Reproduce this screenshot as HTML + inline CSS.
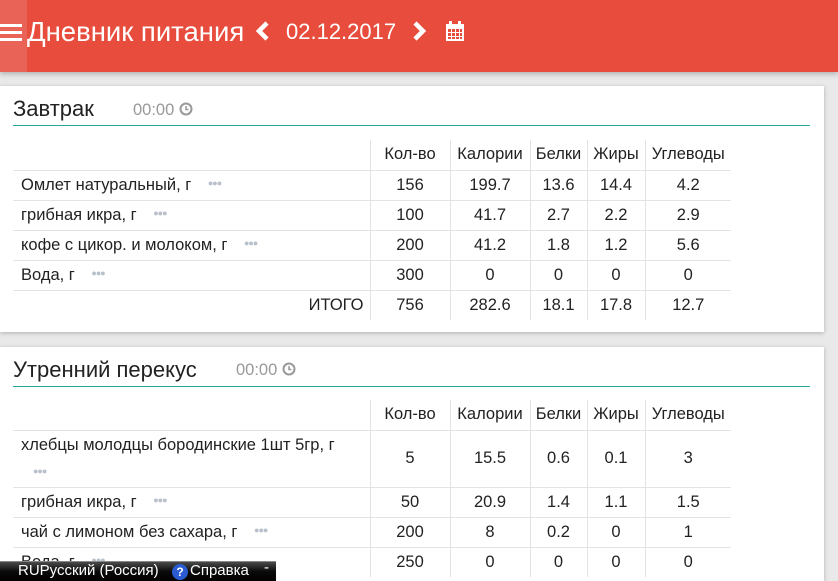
<!DOCTYPE html>
<html><head><meta charset="utf-8"><style>
*{margin:0;padding:0;box-sizing:border-box}
html,body{width:838px;height:581px;overflow:hidden}
body{background:#e9e9e9;font-family:"Liberation Sans","DejaVu Sans",sans-serif;position:relative;color:#222}
.hdr{position:absolute;left:0;top:0;width:838px;height:72px;background:#e74c3c;box-shadow:0 2px 5px rgba(0,0,0,.25)}
.hdr .blk{position:absolute;left:0;top:0;width:27px;height:72px;background:#ea6357}
.hdr .t{position:absolute;left:27px;top:16px;font-size:27.5px;color:#fff}
.hdr .d{position:absolute;left:286px;top:19px;font-size:22px;color:#fff}
.card{position:absolute;left:0;width:824px;background:#fff;box-shadow:0 1px 4px rgba(0,0,0,.25)}
.ttl{position:absolute;left:13px;font-size:22px;color:#222}
.tm{position:absolute;font-size:16.5px;color:#999}
.ul{position:absolute;left:13px;width:797px;height:1px;background:#26a69a}
table{position:absolute;left:13px;border-collapse:collapse;font-size:16.5px;table-layout:fixed}
td{border-top:1px solid #e3e3e3;border-left:1px solid #e3e3e3;text-align:center;height:30px;padding:0;vertical-align:middle;white-space:nowrap}
td.n{border-left:none;text-align:left;padding-left:8px}
tr.h td{border-top:none}
.dots{color:#b8c0cc;font-size:9px;letter-spacing:-1px;margin-left:12px;vertical-align:4px}
.tb{position:absolute;left:0;top:561px;width:276px;height:20px;background:linear-gradient(#4a4a4a,#0a0a0a 50%,#000);color:#fff;font-size:15px;border-top:1px solid #888}
</style></head><body>
<div class="hdr"><div class="blk"></div>
<svg style="position:absolute;left:0;top:22px" width="22" height="20"><rect x="0" y="2" width="22" height="3" fill="#fff"/><rect x="0" y="9" width="22" height="3" fill="#fff"/><rect x="0" y="16" width="22" height="3" fill="#fff"/></svg>
<div class="t">Дневник питания</div>
<svg style="position:absolute;left:255px;top:21px" width="16" height="20"><path d="M12 2 L4 10 L12 18" stroke="#fff" stroke-width="4.5" fill="none"/></svg>
<div class="d">02.12.2017</div>
<svg style="position:absolute;left:411px;top:21px" width="16" height="20"><path d="M4 2 L12 10 L4 18" stroke="#fff" stroke-width="4.5" fill="none"/></svg>
<svg style="position:absolute;left:445px;top:20px" width="20" height="22"><rect x="1" y="4" width="18" height="17" fill="#fff"/><rect x="4" y="1" width="3" height="5" fill="#fff"/><rect x="13" y="1" width="3" height="5" fill="#fff"/><g fill="#e74c3c"><rect x="3" y="9" width="3" height="3"/><rect x="7" y="9" width="3" height="3"/><rect x="11" y="9" width="3" height="3"/><rect x="15" y="9" width="2" height="3"/><rect x="3" y="13" width="3" height="3"/><rect x="7" y="13" width="3" height="3"/><rect x="11" y="13" width="3" height="3"/><rect x="15" y="13" width="2" height="3"/><rect x="3" y="17" width="3" height="2"/><rect x="7" y="17" width="3" height="2"/><rect x="11" y="17" width="3" height="2"/><rect x="15" y="17" width="2" height="2"/></g></svg>
</div>

<div class="card" style="top:86px;height:246px">
<div class="ttl" style="top:10px">Завтрак</div>
<div class="tm" style="left:133px;top:15px">00:00 <svg width="14" height="14" style="vertical-align:-1px"><circle cx="7" cy="7" r="5.5" stroke="#999" stroke-width="2" fill="none"/><path d="M7 4V7.5H9.5" stroke="#999" stroke-width="1.5" fill="none"/></svg></div>
<div class="ul" style="top:39px"></div>
<table style="top:54px;width:718px">
<colgroup><col style="width:357px"><col style="width:80px"><col style="width:80px"><col style="width:57px"><col style="width:58px"><col style="width:86px"></colgroup>
<tr class="h"><td class="n"></td><td>Кол-во</td><td>Калории</td><td>Белки</td><td>Жиры</td><td>Углеводы</td></tr>
<tr><td class="n">Омлет натуральный, г <span class="dots">●●●</span></td><td>156</td><td>199.7</td><td>13.6</td><td>14.4</td><td>4.2</td></tr>
<tr><td class="n">грибная икра, г <span class="dots">●●●</span></td><td>100</td><td>41.7</td><td>2.7</td><td>2.2</td><td>2.9</td></tr>
<tr><td class="n">кофе с цикор. и молоком, г <span class="dots">●●●</span></td><td>200</td><td>41.2</td><td>1.8</td><td>1.2</td><td>5.6</td></tr>
<tr><td class="n">Вода, г <span class="dots">●●●</span></td><td>300</td><td>0</td><td>0</td><td>0</td><td>0</td></tr>
<tr><td class="n" style="text-align:right;padding-right:6px">ИТОГО</td><td>756</td><td>282.6</td><td>18.1</td><td>17.8</td><td>12.7</td></tr>
</table>
</div>

<div class="card" style="top:347px;height:234px;overflow:hidden">
<div class="ttl" style="top:10px">Утренний перекус</div>
<div class="tm" style="left:236px;top:14px">00:00 <svg width="14" height="14" style="vertical-align:-1px"><circle cx="7" cy="7" r="5.5" stroke="#999" stroke-width="2" fill="none"/><path d="M7 4V7.5H9.5" stroke="#999" stroke-width="1.5" fill="none"/></svg></div>
<div class="ul" style="top:39px"></div>
<table style="top:53px;width:718px">
<colgroup><col style="width:357px"><col style="width:80px"><col style="width:80px"><col style="width:57px"><col style="width:58px"><col style="width:86px"></colgroup>
<tr class="h"><td class="n"></td><td>Кол-во</td><td>Калории</td><td>Белки</td><td>Жиры</td><td>Углеводы</td></tr>
<tr><td class="n" style="height:57px;line-height:26px">хлебцы молодцы бородинские 1шт 5гр, г<br><span class="dots">●●●</span></td><td>5</td><td>15.5</td><td>0.6</td><td>0.1</td><td>3</td></tr>
<tr><td class="n">грибная икра, г <span class="dots">●●●</span></td><td>50</td><td>20.9</td><td>1.4</td><td>1.1</td><td>1.5</td></tr>
<tr><td class="n">чай с лимоном без сахара, г <span class="dots">●●●</span></td><td>200</td><td>8</td><td>0.2</td><td>0</td><td>1</td></tr>
<tr><td class="n">Вода, г <span class="dots">●●●</span></td><td>250</td><td>0</td><td>0</td><td>0</td><td>0</td></tr>
</table>
</div>

<div class="tb"><span style="position:absolute;left:18px;top:0px">RUРусский (Россия)</span>
<span style="position:absolute;left:172px;top:2px;width:16px;height:16px;border-radius:50%;background:#2a5bd0;font-size:12px;font-weight:bold;text-align:center;line-height:16px">?</span>
<span style="position:absolute;left:190px;top:0px">Справка</span>
<span style="position:absolute;left:264px;top:-3px">-</span></div>
</body></html>
